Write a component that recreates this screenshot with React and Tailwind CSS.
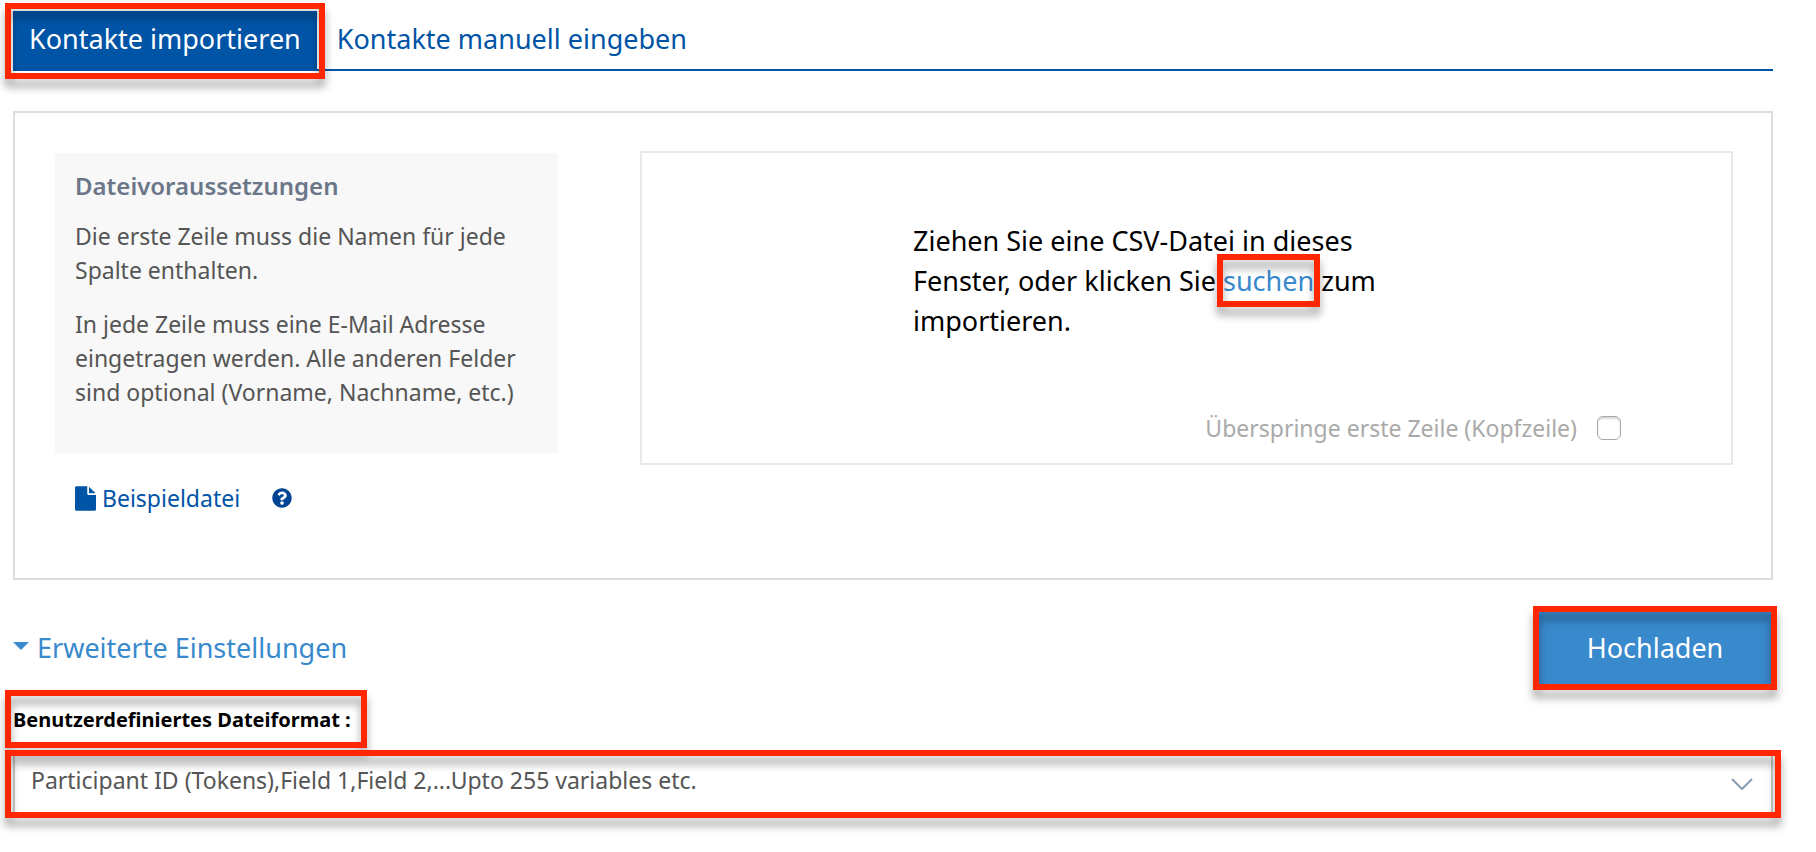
import React, { useState } from "react";
import { FaQuestionCircle } from "react-icons/fa";

// Red frame laid over the element it is placed in
const Marker = ({ className }) => (
  <span
    aria-hidden="true"
    className={`pointer-events-none absolute z-10 border-6 border-[#ff2600] drop-shadow-[0_8px_4px_rgba(0,0,0,0.35)] ${className}`}
  />
);

const FileIcon = () => (
  <svg width="21" height="25" viewBox="0 0 1536 1792" fill="currentColor">
    <path d="M1024 512v-472q22 14 36 28l408 408q14 14 28 36h-472zM896 544q0 40 28 68t68 28h544v1056q0 40-28 68t-68 28h-1344q-40 0-68-28t-28-68v-1600q0-40 28-68t68-28h800v544z" />
  </svg>
);

const Tabs = ({ active, onChange }) => {
  return (
    <nav className="flex border-b-2 border-[#0054a6] text-[27px] leading-10">
      <button
        type="button"
        onClick={() => onChange("import")}
        aria-pressed={active === "import"}
        className="relative -mb-0.5 bg-[#0054a6] px-4 pt-2 pb-3 text-white"
      >
        Kontakte importieren
        <Marker className="-inset-2" />
      </button>
      <button
        type="button"
        onClick={() => onChange("manual")}
        aria-pressed={active === "manual"}
        className="-mb-0.5 px-5 pt-2 pb-3 text-[#0054a6]"
      >
        Kontakte manuell eingeben
      </button>
    </nav>
  );
};

const Requirements = () => {
  return (
    <div className="mt-0.5 w-[503px] shrink-0">
      <section className="h-[300px] bg-[#f8f8f8] px-5 pt-4 text-[23px] leading-[34px] text-[#555555]">
        <h2 className="text-2xl leading-[34px] font-semibold text-[#6b7688]">
          Dateivoraussetzungen
        </h2>
        <p className="mt-4">
          Die erste Zeile muss die Namen für jede
          <br />
          Spalte enthalten.
        </p>
        <p className="mt-5">
          In jede Zeile muss eine E-Mail Adresse
          <br />
          eingetragen werden. Alle anderen Felder
          <br />
          sind optional (Vorname, Nachname, etc.)
        </p>
      </section>
      <div className="mt-7 flex items-center gap-8 px-5 text-[23px] leading-[34px] text-[#0054a6]">
        <a href="#beispiel" className="flex items-center gap-1.5">
          <FileIcon />
          Beispieldatei
        </a>
        <button type="button" aria-label="Hilfe">
          <FaQuestionCircle className="size-5 text-[#004494]" />
        </button>
      </div>
    </div>
  );
};

const DropZone = () => {
  return (
    <div className="flex h-[314px] flex-1 flex-col justify-between border-2 border-[#e8e8e8] pt-[68px] pr-[110px] pb-[18px]">
      <p className="pl-[271px] text-[27px] leading-10 text-black">
        Ziehen Sie eine CSV-Datei in dieses
        <br />
        Fenster, oder klicken Sie{" "}
        <a href="#suchen" className="relative text-[#3989cd]">
          suchen
          <Marker className="-inset-x-1.5 -inset-y-2" />
        </a>{" "}
        zum
        <br />
        importieren.
      </p>
      <label className="flex items-center justify-end gap-5 text-[23px] leading-[34px] text-[#aaaaaa]">
        Überspringe erste Zeile (Kopfzeile)
        <input
          type="checkbox"
          className="size-6 appearance-none rounded-md border border-[#a8a8a8] bg-white shadow-[inset_0_2px_2px_rgba(0,0,0,0.15)] checked:bg-[#3989cd]"
        />
      </label>
    </div>
  );
};

const App = () => {
  const [tab, setTab] = useState("import");

  return (
    <main className="min-h-screen bg-white pt-[11px] pr-[43px] pb-[34px] pl-[13px] font-['Noto_Sans',sans-serif]">
      <Tabs active={tab} onChange={setTab} />

      <section className="mt-10 flex items-start gap-[82px] border-2 border-[#dddddd] pt-[38px] pr-[38px] pb-[63px] pl-10">
        <Requirements />
        <DropZone />
      </section>

      <div className="mt-8 flex items-center justify-between text-[27px] leading-10">
        <button
          type="button"
          className="flex items-center gap-2 text-[#3989cd]"
        >
          <svg
            className="mb-1"
            width="16"
            height="8"
            viewBox="0 0 16 8"
            fill="currentColor"
          >
            <path d="M0 0h16L8 8z" />
          </svg>
          Erweiterte Einstellungen
        </button>
        <button
          type="button"
          className="relative w-[236px] rounded-sm bg-[#3989cd] py-4 text-white"
        >
          Hochladen
          <Marker className="-inset-x-1 -inset-y-1.5" />
        </button>
      </div>

      <label
        htmlFor="fileFormat"
        className="relative mt-3 block w-fit py-2 text-xl leading-8 font-bold text-black"
      >
        Benutzerdefiniertes Dateiformat :
        <Marker className="-top-1.5 -right-4 -bottom-1 -left-2" />
      </label>
      <div className="relative mt-2.5">
        <select
          id="fileFormat"
          className="block h-[60px] w-full appearance-none border-2 border-[#cccccc] bg-white px-4 pb-2 text-[23px] text-[#555555]"
        >
          <option>
            Participant ID (Tokens),Field 1,Field 2,...Upto 255 variables etc.
          </option>
        </select>
        <svg
          className="pointer-events-none absolute top-6 right-5"
          width="22"
          height="12"
          viewBox="0 0 22 12"
          fill="none"
          stroke="#8a9bb5"
          strokeWidth="2"
        >
          <path d="M1 1l10 10L21 1" />
        </svg>
        <Marker className="-inset-x-2 -inset-y-1" />
      </div>
    </main>
  );
};

export default App;
